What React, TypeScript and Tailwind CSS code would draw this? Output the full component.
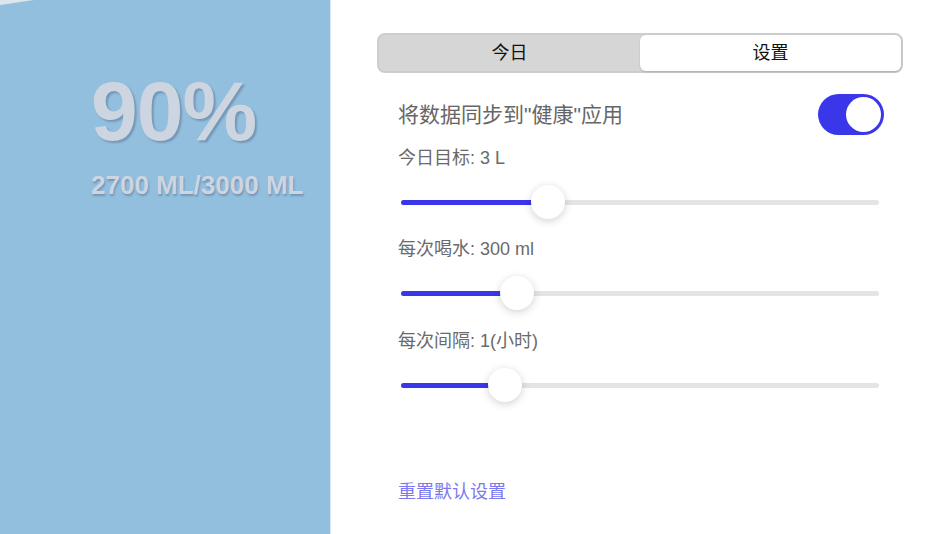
const cjk = "font-['Liberation_Sans','Noto_Sans_CJK_SC',sans-serif]";

type SliderRowProps = {
  label: string;
  ratio: number;
};

function SliderRow({ label, ratio }: SliderRowProps) {
  const pct = `${ratio * 100}%`;
  return (
    <div className="flex flex-col">
      <div className={`pl-[21px] text-[18px] leading-[24px] text-[#6a6a6a] ${cjk}`}>{label}</div>
      <div className="mt-[15px] flex h-[34px] items-center px-[24px]">
        <div className="relative h-[5px] w-full rounded-full bg-[#e4e4e4]">
          <div className="absolute inset-y-0 left-0 rounded-full bg-[#3a37ea]" style={{ width: pct }} />
          <div
            className="absolute top-1/2 h-[34px] w-[34px] -translate-x-1/2 -translate-y-1/2 rounded-full bg-white shadow-[0_2px_8px_rgba(0,0,0,0.18)]"
            style={{ left: pct }}
          />
        </div>
      </div>
    </div>
  );
}

export default function App() {
  return (
    <div className="flex h-[534px] w-[950px] overflow-hidden bg-white">
      {/* water level panel */}
      <div className="relative w-[330px] shrink-0 bg-[#93bfdf] pl-[91px] pt-[69px] font-['Liberation_Sans',Arial,sans-serif] font-bold text-[#cdd5e1]">
        <svg className="absolute left-0 top-0" width="40" height="8" viewBox="0 0 40 8">
          <polygon points="0,0 34,0 0,5" fill="#dfe5ec" />
        </svg>
        <div className="text-[84px] leading-none tracking-[-1px] [text-shadow:2px_2px_2px_rgba(80,100,130,0.45)]">90%</div>
        <div className="mt-[19px] text-[26px] leading-none [text-shadow:1px_2px_2px_rgba(80,100,130,0.45)]">
          2700 ML/3000 ML
        </div>
      </div>
      <div className="w-px shrink-0 bg-[#d5e6f2]" />

      {/* settings */}
      <div className="flex flex-1 flex-col pl-[46px] pr-[47px]">
        <div className="mt-[33px] flex h-[40px] rounded-[8px] border-2 border-[#cdcdcd] bg-[#d6d6d6]">
          <div className={`flex flex-1 items-center justify-center text-[18px] text-[#111] ${cjk}`}>今日</div>
          <div
            className={`flex flex-1 items-center justify-center rounded-[6px] bg-white text-[18px] text-[#111] shadow-[0_1px_2px_rgba(0,0,0,0.15)] ${cjk}`}
          >
            设置
          </div>
        </div>

        <div className="mt-[21px] flex h-[41px] items-center justify-between pl-[21px] pr-[19px]">
          <span className={`text-[21px] text-[#666666] ${cjk}`}>将数据同步到"健康"应用</span>
          <div className="flex h-[41px] w-[66px] items-center justify-end rounded-full bg-[#3a37ea] p-[3px]">
            <div className="h-[35px] w-[35px] rounded-full bg-white" />
          </div>
        </div>

        <div className="mt-[11px]">
          <SliderRow label="今日目标: 3 L" ratio={0.3075} />
        </div>
        <div className="mt-[18px]">
          <SliderRow label="每次喝水: 300 ml" ratio={0.243} />
        </div>
        <div className="mt-[19px]">
          <SliderRow label="每次间隔: 1(小时)" ratio={0.2176} />
        </div>

        <div className={`mt-[77px] pl-[21px] text-[18px] leading-[26px] text-[#7b78f0] ${cjk}`}>重置默认设置</div>
      </div>
    </div>
  );
}
